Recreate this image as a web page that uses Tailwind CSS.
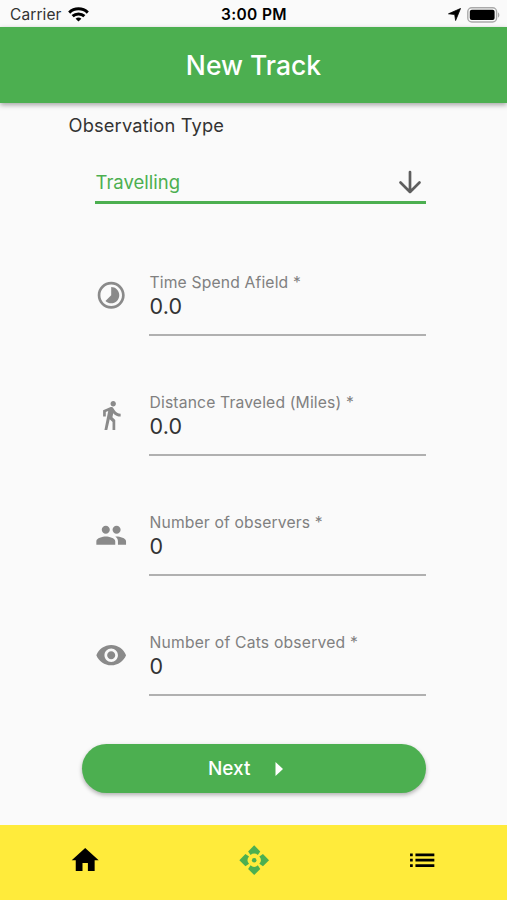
<!DOCTYPE html>
<html lang="en">
<head>
<meta charset="utf-8">
<title>New Track</title>
<script src="https://cdn.jsdelivr.net/npm/@tailwindcss/browser@4"></script>
</head>
<body class="w-[507px] h-[900px] overflow-hidden bg-[#fafafa] font-['Inter','Liberation_Sans',sans-serif] flex flex-col">
  <div class="h-[27px] shrink-0 grid grid-cols-3 items-center pl-[10px] pr-[7px] pt-[2px] text-[15.5px] leading-[24px] text-[#222]">
    <div class="flex items-center gap-[6px]">
      <span class="tracking-[0.1px] whitespace-nowrap text-[#333]">Carrier</span>
      <svg class="w-[21px] h-[15px]" viewBox="0 0 21 15" fill="none" stroke="#000" stroke-width="3"><path d="M1.200 5.600C6.400.6 14.600.6 19.800 5.600"/><path d="M4.600 9.200c3.300-3.100 8.500-3.100 11.800 0"/><path d="M7.600 11.700c1.700-1.500 4.100-1.500 5.800 0L10.500 14.600z" fill="#000" stroke="none"/></svg>
    </div>
    <div class="text-center font-semibold text-black whitespace-nowrap tracking-[0.35px] -mr-[1px] -ml-[3px]">3:00 PM</div>
    <div class="flex items-center justify-end gap-[6px]">
      <svg class="w-[13px] h-[13px]" viewBox="0 0 13 13"><path d="M12.500.5L7.600 12.500L6.700 6.500L.500 5.800z" fill="#000" stroke="#000" stroke-width=".8" stroke-linejoin="round"/></svg>
      <svg class="w-[33px] h-[16px]" viewBox="0 0 33 16"><rect x=".8" y=".8" width="28.800" height="14.200" rx="4" fill="none" stroke="#aaa" stroke-width="1.400"/><rect x="2.800" y="2.800" width="24.800" height="10.200" rx="2" fill="#000"/><path d="M31 5.500c1.800.6 1.800 4.400 0 5z" fill="#aaa"/></svg>
    </div>
  </div>
  <header class="h-[76px] shrink-0 bg-[#4caf50] shadow-[0_2px_5px_rgba(0,0,0,0.35)] flex items-center justify-center pt-[2px]">
    <h1 class="text-white text-[26.500px] font-medium">New Track</h1>
  </header>
  <main class="flex-1 flex flex-col">
    <h2 class="mt-[10px] ml-[68.500px] h-[24px] leading-[24px] text-[18.300px] tracking-[0.15px] text-[#333]">Observation Type</h2>
    <div class="mt-[23px] ml-[95px] w-[331px] h-[44px] border-b-[3px] border-[#4caf50] flex items-center justify-between">
      <span class="text-[18.500px] text-[#4caf50] pt-[5px] pl-[0.500px]">Travelling</span>
      <svg class="w-[32px] h-[32px] mt-[2px]" viewBox="0 0 32 32" fill="none" stroke="#5e5e5e" stroke-width="2.700" stroke-linecap="round" stroke-linejoin="round"><path d="M16 6v20M6.500 16.500L16 26l9.500-9.500"/></svg>
    </div>
    <div class="mt-[66px] ml-[95px] w-[331px] flex flex-col gap-[54px]">
      <div class="flex h-[66px]">
        <svg class="w-[32.400px] h-[32.400px] mt-[9px] mr-[21.600px]" viewBox="0 0 24 24" fill="#8a8a8a"><path d="M16.240 7.760C15.070 6.590 13.540 6 12 6v6l-4.240 4.240c2.340 2.340 6.140 2.340 8.490 0 2.340-2.340 2.340-6.140-.01-8.480zM12 2C6.480 2 2 6.480 2 12s4.480 10 10 10 10-4.480 10-10S17.520 2 12 2zm0 18c-4.420 0-8-3.580-8-8s3.580-8 8-8 8 3.580 8 8-3.580 8-8 8z"/></svg>
        <div class="flex-1 border-b-2 border-[#b0b0b0]"><div class="text-[15.700px] leading-[19px] pt-[3px] pl-[0.500px] tracking-[0.15px] text-[#808080]">Time Spend Afield *</div><div class="text-[21.500px] leading-[28px] pl-[0.500px] tracking-[0.2px] text-[#333]">0.0</div></div>
      </div>
      <div class="flex h-[66px]">
        <svg class="w-[32.400px] h-[32.400px] mt-[9px] mr-[21.600px]" viewBox="0 0 24 24" fill="#8a8a8a"><path d="M13.500 5.500c1.100 0 2-.9 2-2s-.9-2-2-2-2 .9-2 2 .9 2 2 2zM9.800 8.900L7 23h2.100l1.800-8 2.100 2v6h2v-7.500l-2.100-2 .6-3C14.800 12 16.800 13 19 13v-2c-1.900 0-3.500-1-4.300-2.400l-1-1.600c-.4-.6-1-1-1.700-1-.3 0-.5.1-.8.1L6 8.300V13h2V9.600l1.800-.7"/></svg>
        <div class="flex-1 border-b-2 border-[#b0b0b0]"><div class="text-[15.700px] leading-[19px] pt-[3px] pl-[0.500px] tracking-[0.15px] text-[#808080]">Distance Traveled (Miles) *</div><div class="text-[21.500px] leading-[28px] pl-[0.500px] tracking-[0.2px] text-[#333]">0.0</div></div>
      </div>
      <div class="flex h-[66px]">
        <svg class="w-[32.400px] h-[32.400px] mt-[9px] mr-[21.600px]" viewBox="0 0 24 24" fill="#8a8a8a"><path d="M16 11c1.660 0 2.990-1.340 2.990-3S17.660 5 16 5c-1.660 0-3 1.340-3 3s1.340 3 3 3zm-8 0c1.660 0 2.990-1.340 2.990-3S9.660 5 8 5C6.340 5 5 6.340 5 8s1.340 3 3 3zm0 2c-2.330 0-7 1.170-7 3.500V19h14v-2.500c0-2.330-4.670-3.500-7-3.500zm8 0c-.29 0-.62.02-.97.05 1.160.84 1.970 1.970 1.970 3.450V19h6v-2.500c0-2.330-4.670-3.500-7-3.500z"/></svg>
        <div class="flex-1 border-b-2 border-[#b0b0b0]"><div class="text-[15.700px] leading-[19px] pt-[3px] pl-[0.500px] tracking-[0.15px] text-[#808080]">Number of observers *</div><div class="text-[21.500px] leading-[28px] pl-[0.500px] text-[#333]">0</div></div>
      </div>
      <div class="flex h-[66px]">
        <svg class="w-[32.400px] h-[32.400px] mt-[9px] mr-[21.600px]" viewBox="0 0 24 24" fill="#8a8a8a"><path d="M12 4.500C7 4.500 2.730 7.610 1 12c1.730 4.390 6 7.500 11 7.500s9.270-3.110 11-7.500c-1.730-4.390-6-7.500-11-7.500zM12 17c-2.760 0-5-2.240-5-5s2.240-5 5-5 5 2.240 5 5-2.240 5-5 5zm0-8c-1.660 0-3 1.340-3 3s1.340 3 3 3 3-1.340 3-3-1.340-3-3-3z"/></svg>
        <div class="flex-1 border-b-2 border-[#b0b0b0]"><div class="text-[15.700px] leading-[19px] pt-[3px] pl-[0.500px] tracking-[0.2px] text-[#808080]">Number of Cats observed *</div><div class="text-[21.500px] leading-[28px] pl-[0.500px] text-[#333]">0</div></div>
      </div>
    </div>
    <button class="mt-[48px] ml-[82px] w-[344px] h-[49px] rounded-full bg-[#4caf50] shadow-[0_2px_4px_rgba(0,0,0,0.3)] text-white text-[19px] font-medium flex items-center pl-[126px]">
      <span class="pt-[1px]">Next</span>
      <svg class="w-[9px] h-[14px] ml-[24px]" viewBox="0 0 9 14"><path d="M.5 0v14l7.500-7z" fill="#fff"/></svg>
    </button>
  </main>
  <nav class="h-[75px] shrink-0 bg-[#ffeb3b] grid grid-cols-3 justify-items-center pt-[19px] pl-[1px]">
    <svg class="w-[32.400px] h-[32.400px]" viewBox="0 0 24 24"><path d="M10 20v-6h4v6h5v-8h3L12 3 2 12h3v8z"/></svg>
    <svg class="w-[32.400px] h-[32.400px]" viewBox="0 0 24 24" fill="#4caf50">
      <circle cx="12" cy="12" r="1.700"/>
      <path id="arm" d="M12 1L7.500 5.500L9.300 8.200L10.600 7.300Q12 6.700 13.400 7.300L14.700 8.200L16.500 5.500z"/>
      <use href="#arm" transform="rotate(90 12 12)"/>
      <use href="#arm" transform="rotate(180 12 12)"/>
      <use href="#arm" transform="rotate(270 12 12)"/>
    </svg>
    <svg class="w-[32.400px] h-[32.400px]" viewBox="0 0 24 24"><path d="M3 13h2v-2H3v2zm0 4h2v-2H3v2zm0-8h2V7H3v2zm4 4h14v-2H7v2zm0 4h14v-2H7v2zM7 7v2h14V7H7z"/></svg>
  </nav>
</body>
</html>
